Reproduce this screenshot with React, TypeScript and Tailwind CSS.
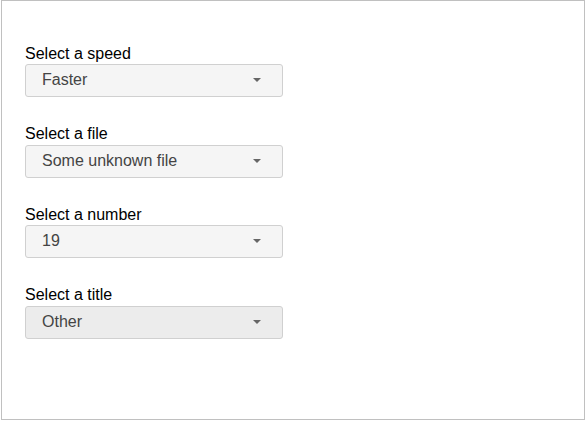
import React from 'react';

const fields = [
  { label: 'Select a speed', value: 'Faster', active: false },
  { label: 'Select a file', value: 'Some unknown file', active: false },
  { label: 'Select a number', value: '19', active: false },
  { label: 'Select a title', value: 'Other', active: true },
];

const Caret = () => (
  <svg width="8" height="4" viewBox="0 0 8 4" className="shrink-0">
    <path d="M0 0 L8 0 L4 4 Z" fill="#666" />
  </svg>
);

export default function App() {
  return (
    <div className="ml-px w-[584px] h-[420px] border border-[#c0c0c0] bg-white font-['Liberation_Sans',Arial,sans-serif]">
      <div className="pt-[44px] pl-[23px] flex flex-col gap-[28px]">
        {fields.map((f) => (
          <div key={f.label} className="flex flex-col">
            <label className="text-[16px] leading-[18.4px] text-black">{f.label}</label>
            <div
              className={`w-[258px] h-[33px] mt-px rounded-[3px] border border-[#d0d0d0] flex items-center justify-between pl-[16px] pr-[21px] pb-px text-[16px] text-[#444] ${
                f.active ? 'bg-[#ececec]' : 'bg-[#f5f5f5]'
              }`}
            >
              <span>{f.value}</span>
              <Caret />
            </div>
          </div>
        ))}
      </div>
    </div>
  );
}
